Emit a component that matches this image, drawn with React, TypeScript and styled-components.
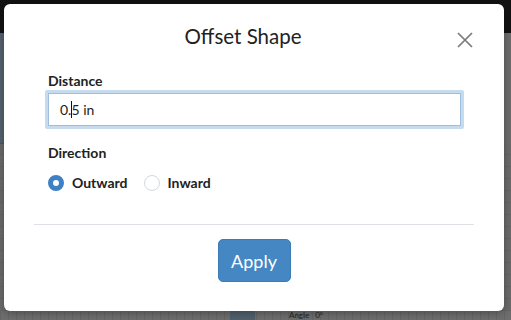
import React, { useState } from "react"
import styled, { createGlobalStyle } from "styled-components"

const GlobalStyle = createGlobalStyle`
  html, body {
    margin: 0;
    padding: 0;
    width: 511px;
    height: 320px;
    overflow: hidden;
    font-family: Lato, "Open Sans", "Liberation Sans", sans-serif;
  }
`

/**
 * Offset shape dialog, shown over the dimmed editor.
 */
export default function App() {
  const [direction, setDirection] = useState<"out" | "in">("out")

  return (
    <>
      <GlobalStyle />
      <Backdrop>
        <TopBar />
        <Workspace>
          <SidePanel />
          <Canvas />
        </Workspace>
        <BottomBar>
          <BarBlock />
          <BarLabel>Angle</BarLabel>
          <BarValue>0°</BarValue>
        </BottomBar>

        <Dialog>
          <Header>
            <Title>Offset Shape</Title>
            <CloseButton aria-label="Close">
              <svg width="16" height="16" viewBox="0 0 16 16">
                <path d="M1 1 L15 15 M15 1 L1 15" stroke="#7a7a7a" strokeWidth="1.7" fill="none" />
              </svg>
            </CloseButton>
          </Header>

          <Body>
            <Field>
              <Label>Distance</Label>
              <InputRing>
                <TextBox>
                  0.<Caret />5 in
                </TextBox>
              </InputRing>
            </Field>

            <Field>
              <Label>Direction</Label>
              <RadioRow>
                <RadioOption onClick={() => setDirection("out")}>
                  <Radio checked={direction === "out"} />
                  Outward
                </RadioOption>
                <RadioOption onClick={() => setDirection("in")}>
                  <Radio checked={direction === "in"} />
                  Inward
                </RadioOption>
              </RadioRow>
            </Field>
          </Body>

          <Footer>
            <ApplyButton>Apply</ApplyButton>
          </Footer>
        </Dialog>
      </Backdrop>
    </>
  )
}

const Backdrop = styled.div`
  position: relative;
  width: 511px;
  height: 320px;
  display: flex;
  flex-direction: column;
  background: #6c6c6c;
`

const TopBar = styled.div`
  height: 33px;
  background: #121212;
`

const Workspace = styled.div`
  flex: 1;
  display: flex;
  flex-direction: column;
`

const SidePanel = styled.div`
  height: 110px;
  width: 8px;
  background: #55636e;
  border-bottom: 1px solid #3f5a74;
`

const Canvas = styled.div`
  flex: 1;
  background-color: #6b6b6b;
  background-image: repeating-linear-gradient(
    0deg,
    rgba(0, 0, 0, 0.06) 0 1px,
    transparent 1px 12px
  );
`

const BottomBar = styled.div`
  height: 9px;
  display: flex;
  align-items: center;
  gap: 6px;
  padding-left: 230px;
  background-color: #6e6e6e;
  background-image: repeating-linear-gradient(
    90deg,
    rgba(0, 0, 0, 0.08) 0 1px,
    transparent 1px 8px
  );
  font-size: 8px;
  line-height: 9px;
  color: #222;
`

const BarBlock = styled.div`
  width: 25px;
  height: 9px;
  background: #52606c;
`

const BarLabel = styled.span`
  margin-left: 28px;
`

const BarValue = styled.span``

const Dialog = styled.div`
  position: absolute;
  left: 4px;
  top: 4px;
  width: 500px;
  height: 307px;
  background: #fff;
  border-radius: 6px;
  display: flex;
  flex-direction: column;
  box-shadow: 0 2px 8px rgba(0, 0, 0, 0.3);
`

const Header = styled.div`
  position: relative;
  height: 64px;
  display: flex;
  align-items: center;
  justify-content: center;
  padding-right: 22px;
`

const Title = styled.h2`
  margin: 0;
  font-size: 20.5px;
  font-weight: 400;
  color: #222;
`

const CloseButton = styled.button`
  position: absolute;
  right: 31px;
  top: 28px;
  width: 16px;
  height: 16px;
  padding: 0;
  border: none;
  background: none;
  display: flex;
`

const Body = styled.div`
  padding: 4px 40px 0 41px;
  display: flex;
  flex-direction: column;
  gap: 15px;
`

const Field = styled.div`
  display: flex;
  flex-direction: column;
`

const Label = styled.div`
  font-size: 14px;
  font-weight: 700;
  color: #222;
  line-height: 18px;
  padding-left: 3px;
`

const InputRing = styled.div`
  border: 3px solid #c6dcee;
  border-radius: 2px;
`

const TextBox = styled.div`
  height: 31px;
  border: 1px solid #9dbfdd;
  display: flex;
  align-items: center;
  padding-left: 11px;
  font-size: 14px;
  color: #222;
`

const Caret = styled.span`
  display: inline-block;
  width: 1px;
  height: 17px;
  background: #111;
  margin: 0 -1px 0 0;
`

const RadioRow = styled.div`
  display: flex;
  align-items: center;
  gap: 16px;
  padding-left: 3px;
  margin-top: 12px;
`

const RadioOption = styled.label`
  display: flex;
  align-items: center;
  gap: 8px;
  font-size: 14px;
  font-weight: 700;
  color: #222;
  cursor: pointer;
`

const Radio = styled.span<{ checked: boolean }>`
  box-sizing: border-box;
  width: 16px;
  height: 16px;
  border-radius: 50%;
  border: ${({ checked }) => (checked ? "5px solid #3f81c4" : "1px solid #d4d8dc")};
  background: #fff;
`

const Footer = styled.div`
  margin: 33px 30px 0 30px;
  border-top: 1px solid #dde1e5;
  display: flex;
  justify-content: center;
  padding-top: 14px;
`

const ApplyButton = styled.button`
  width: 73px;
  height: 43px;
  border: 1px solid #3c7bb5;
  border-radius: 5px;
  background: #4587c2;
  color: #fff;
  font-family: inherit;
  font-size: 18px;
  padding: 0;
`
